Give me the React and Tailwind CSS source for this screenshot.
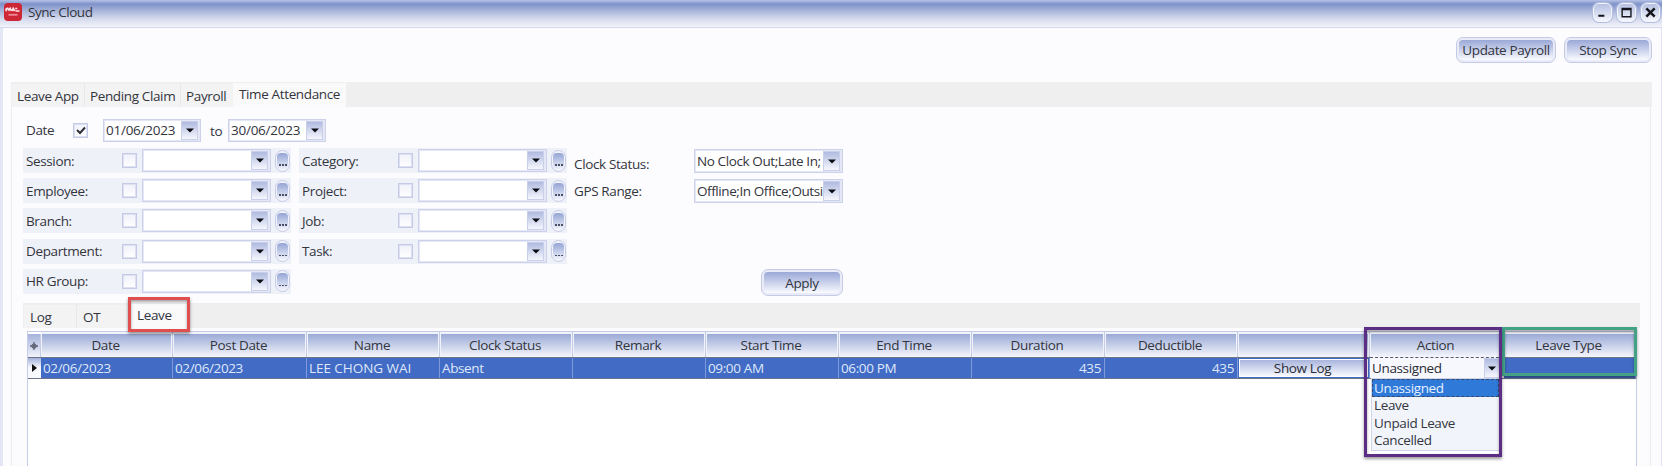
import React from "react";

function Arrow() {
  return (
    <svg className="block h-[5px] w-[8px]" viewBox="0 0 8 5">
      <path d="M0 0.5h8L4 4.6z" fill="#0b0c14" />
    </svg>
  );
}

function DropButton({ className = "" }) {
  return (
    <span className={"flex shrink-0 items-center justify-center border border-[#c9cfe8] bg-linear-to-b from-[#b0bbe0] to-[#f6f7fd] " + className}>
      <Arrow />
    </span>
  );
}

function Check({ checked, className = "" }) {
  return (
    <span className={"flex h-[15px] w-[15px] shrink-0 items-center justify-center border border-[#c6cae6] bg-linear-to-b from-[#f0f1fa] to-white shadow-[inset_0_0_0_1px_#dde0f1] " + className}>
      {checked && (
        <svg className="h-[9px] w-[10px]" viewBox="0 0 10 9">
          <path d="M1 4l3 3 5-5.5" fill="none" stroke="#2b2d36" strokeWidth="1.9" />
        </svg>
      )}
    </span>
  );
}

function Combo({ className = "", children }) {
  return (
    <span className={"flex shrink-0 border border-[#cdd2ea] bg-[#e4e7f5] p-px pr-[2px] " + className}>
      <span className="flex min-w-0 flex-1 items-center whitespace-nowrap bg-white">{children}</span>
      <DropButton className="w-[17px]" />
    </span>
  );
}

function Button({ className = "", children }) {
  return (
    <button className={"flex shrink-0 rounded-[7px] border border-[#c5cbe6] bg-[#e9ecf7] p-[2px] " + className}>
      <span className="flex h-full w-full items-center justify-center rounded-[4px] bg-linear-to-b from-[#9aa8d6] to-[#fafbff] whitespace-nowrap">{children}</span>
    </button>
  );
}

function Filter({ label }) {
  return (
    <div className="flex h-[25px] w-[268px] items-center bg-[#eff1f9] pl-[3px]">
      <span className="w-[96px] shrink-0 whitespace-nowrap">{label}</span>
      <Check />
      <Combo className="ml-[5px] h-[23px] w-[129px]" />
      <span className="ml-[4px] flex h-[22px] w-[15px] shrink-0 rounded-full border border-[#c5cbe6] bg-[#f3f4fb] p-[2px] px-px">
        <span className="flex flex-1 items-end justify-center gap-px rounded-[4px] bg-linear-to-b from-[#94a4d4] to-[#eef0fa] pb-[3px]">
          <i className="h-[1.5px] w-[2px] bg-[#4a4f66]" />
          <i className="h-[1.5px] w-[2px] bg-[#4a4f66]" />
          <i className="h-[1.5px] w-[2px] bg-[#4a4f66]" />
        </span>
      </span>
    </div>
  );
}

function WinButton({ children }) {
  return (
    <span className="flex h-[19px] w-[19px] items-center justify-center rounded-[6px] border border-[#f3f5fc] bg-linear-to-b from-[#b5c0e2] to-[#f5f6fc] shadow-[0_0_0_1px_#b3bddf]">
      <svg className="h-[13px] w-[13px] shrink-0" viewBox="0 0 14 14">{children}</svg>
    </span>
  );
}

const columns = [
  ["Date", "02/06/2023"],
  ["Post Date", "02/06/2023"],
  ["Name", "LEE CHONG WAI"],
  ["Clock Status", "Absent"],
  ["Remark", ""],
  ["Start Time", "09:00 AM"],
  ["End Time", "06:00 PM"],
  ["Duration", "435"],
  ["Deductible", "435"],
  ["", "Show Log"],
  ["Action", "Unassigned"],
  ["Leave Type", ""],
];

function Cell({ name, value }) {
  if (value === "Show Log")
    return (
      <div className="border-r border-[#7f9adb] p-px">
        <div className="flex h-full items-center justify-center border border-white bg-linear-to-b from-[#a9b5dc] to-[#f8f9fe] pr-[2px] text-[#2a2c36]">{value}</div>
      </div>
    );
  if (name === "Action")
    return (
      <div className="-mt-px flex border-t border-dashed border-[#55596b] bg-[#f6f8fd] pl-[2px] pr-[4px] text-[#2a2c36]">
        <span className="flex flex-1 items-center">{value}</span>
        <DropButton className="w-[16px]" />
      </div>
    );
  const right = value === "435";
  const wide = name === "Name";
  return (
    <div className={"flex items-center whitespace-nowrap border-r border-[#7f9adb] pl-[2px] pr-[3px] " + (right ? "justify-end " : "") + (wide ? "tracking-[-0.05px]" : "")}>
      {value}
    </div>
  );
}

export default function App() {
  return (
    <div className="relative flex h-[466px] w-[1662px] flex-col overflow-hidden bg-[#fcfcff] font-['Open_Sans','Noto_Sans',sans-serif] text-[13.5px] leading-[18px] tracking-[-0.37px] text-[#33353d]">
      <header className="flex h-[28px] shrink-0 items-center border-b border-[#d3d8ee] bg-[linear-gradient(#b6c2e6_0px,#7f92c9_4px,#a9b5da_11px,#d5daed_19px,#f3f4fb_27px)] pl-[4px] pr-[2px]">
        <svg className="mb-[3px] h-[18px] w-[18px]" viewBox="0 0 18 18">
          <rect width="18" height="18" rx="4" fill="#cd2735" />
          <path d="M2.2 8.200V6l1.500-.7L5 7l1.200-1.700L7.500 8m.7 0l1-2.500L10.700 8m.5-2.500h2M11.500 8h4" fill="none" stroke="#ffe9ea" strokeWidth="1.700" />
          <path d="M4.500 11.800h9" stroke="#f08a98" strokeWidth="1.800" />
        </svg>
        <h1 className="ml-[6px] pb-[4px] tracking-[-0.45px]">Sync Cloud</h1>
        <div className="ml-auto flex gap-[5px] pb-[3px]">
          <WinButton><path d="M2.500 10.500h6.500" stroke="#15161d" strokeWidth="2.200" /></WinButton>
          <WinButton><path d="M2.300 2.500h9.500v9H2.300zM2.300 3.700h9.500" fill="none" stroke="#15161d" strokeWidth="1.500" /></WinButton>
          <WinButton><path d="M2.500 2.500l9 9m0-9l-9 9" stroke="#15161d" strokeWidth="2.700" /></WinButton>
        </div>
      </header>

      <main className="flex flex-1 flex-col border-l-[3px] border-r border-l-[#e3e6f4] border-r-[#dfe2f2] pl-[8px] pr-[9px]">
        <div className="flex h-[54px] shrink-0 justify-end gap-[8px] pt-[9px]">
          <Button className="h-[26px] w-[100px]">Update Payroll</Button>
          <Button className="h-[26px] w-[88px]">Stop Sync</Button>
        </div>

        <nav className="flex h-[25px] shrink-0 items-end bg-[#efefef] pl-px">
          <span className="flex h-[23px] w-[73px] items-center border-r border-[#e8e8e8] bg-[#f3f3f3] pl-[5px] whitespace-nowrap">Leave App</span>
          <span className="flex h-[23px] w-[96px] items-center border-r border-[#e8e8e8] bg-[#f3f3f3] pl-[5px] whitespace-nowrap">Pending Claim</span>
          <span className="flex h-[23px] w-[52px] items-center bg-[#f3f3f3] pl-[5px] whitespace-nowrap">Payroll</span>
          <span className="flex h-[24px] w-[113px] items-center bg-[#fafafb] pb-[2px] pl-[6px] whitespace-nowrap">Time Attendance</span>
        </nav>

        <section className="mr-px flex flex-1 flex-col border-x border-[#ececee] pl-[11px] pr-[10px]">
          <div className="flex h-[41px] shrink-0 items-center pl-[3px] pt-[6px]">
            <span className="w-[47px] pb-px">Date</span>
            <Check checked />
            <Combo className="ml-[15px] h-[23px] w-[98px]"><span className="pb-px pl-px tracking-[-0.25px]">01/06/2023</span></Combo>
            <span className="ml-[9px] w-[18px]">to</span>
            <Combo className="h-[23px] w-[98px]"><span className="pb-px pl-px tracking-[-0.25px]">30/06/2023</span></Combo>
          </div>
          <div className="flex h-[155px] shrink-0 gap-[7px]">
            <div className="flex flex-col gap-[5.2px]">
              {["Session:", "Employee:", "Branch:", "Department:", "HR Group:"].map((l) => <Filter key={l} label={l} />)}
            </div>
            <div className="ml-px flex flex-col gap-[5.2px]">
              {["Category:", "Project:", "Job:", "Task:"].map((l) => <Filter key={l} label={l} />)}
            </div>
            <div className="-ml-px flex w-[270px] flex-col pt-px">
              <div className="flex h-[30px] items-start">
                <span className="w-[121px] pl-px pt-[6px]">Clock Status:</span>
                <Combo className="h-[24px] w-[149px]"><span className="pl-px tracking-[-0.4px]">No Clock Out;Late In;</span></Combo>
              </div>
              <div className="flex h-[30px] items-start">
                <span className="w-[121px] pl-px pt-[3px]">GPS Range:</span>
                <Combo className="h-[24px] w-[149px]"><span className="pl-px tracking-[-0.42px]">Offline;In Office;Outsi</span></Combo>
              </div>
              <Button className="ml-auto mt-[60px] h-[27px] w-[82px]">Apply</Button>
            </div>
          </div>

          <nav className="flex h-[25px] shrink-0 items-end bg-[#efefef] pl-px">
            <span className="flex h-[23px] w-[53px] items-center border-r border-[#e8e8e8] bg-[#f3f3f3] pl-[6px]">Log</span>
            <span className="flex h-[23px] w-[52px] items-center bg-[#f3f3f3] pl-[6px]">OT</span>
            <span className="flex h-[24px] w-[58px] items-center bg-[#fafafb] pb-[3px] pl-[8px]">Leave</span>
          </nav>

          <div className="ml-[4px] mr-[3px] mt-[3px] flex flex-1 flex-col border-x border-t border-[#c6cce5] bg-white">
            <div className="grid h-[25px] shrink-0 grid-cols-[13px_132px_134px_133px_133px_133px_133px_133px_133px_133px_132px_134px_1fr]">
              <div className="mt-[2px] flex items-center justify-center border-r border-[#c6cce5] bg-linear-to-b from-[#a5b2da] to-[#f2f4fb]">
                <svg className="size-[8px]" viewBox="0 0 8 8"><path d="M4 0v8M0 4h8" stroke="#5c6172" strokeWidth="1.300" /><circle cx="4" cy="4" r="2.600" fill="#666b7c" /></svg>
              </div>
              {columns.map(([h], i) => (
                <div key={i} className="border-r border-[#c6cce5] bg-[#f1f3fa] px-px pt-[2px]">
                  <div className="flex h-full items-center justify-center bg-linear-to-b from-[#9baad6] to-[#f6f7fc] pb-px pr-[2px]">{h}</div>
                </div>
              ))}
            </div>
            <div className="grid h-[22px] shrink-0 grid-cols-[13px_132px_134px_133px_133px_133px_133px_133px_133px_133px_132px_134px_1fr] grid-rows-[20px] border-y border-[#6c7489] bg-[#416bc4] text-[#dfe8fb]">
              <div className="flex items-center justify-center bg-linear-to-b from-[#a5b2da] to-[#f8f9fd] to-50%">
                <svg className="h-[8px] w-[5px]" viewBox="0 0 5 8"><path d="M0 0l5 4-5 4z" fill="#111" /></svg>
              </div>
              {columns.map(([h, v], i) => <Cell key={i} name={h} value={v} />)}
            </div>
          </div>
        </section>
      </main>

      <ul className="absolute left-[1371px] top-[378px] h-[73px] w-[129px] border border-[#cfd4e8] bg-[#f1f5fb]">
        <li className="h-[18px] border border-dashed border-[#394a6d] bg-[#2f79d8] pl-px leading-[16px] text-[#e6f1ff]">Unassigned</li>
        <li className="h-[17.7px] pl-[2px] leading-[17px]">Leave</li>
        <li className="h-[17.7px] pl-[2px] leading-[17px]">Unpaid Leave</li>
        <li className="h-[17.7px] pl-[2px] leading-[17px]">Cancelled</li>
      </ul>
      <div className="absolute left-[128px] top-[297px] h-[35px] w-[62px] border-[3px] border-[#df4f4f] shadow-[0_2px_3px_rgba(0,0,0,.4),inset_0_2px_3px_rgba(0,0,0,.35)]" />
      <div className="absolute left-[1502px] top-[327px] h-[49px] w-[135px] border-[3px] border-[#43a286] shadow-[0_2px_3px_rgba(0,0,0,.4),inset_0_2px_3px_rgba(0,0,0,.35)]" />
      <div className="absolute left-[1364px] top-[327px] h-[130px] w-[138px] border-[3px] border-[#5b2d85] shadow-[0_2px_3px_rgba(0,0,0,.4),inset_0_2px_3px_rgba(0,0,0,.35)]" />
    </div>
  );
}
